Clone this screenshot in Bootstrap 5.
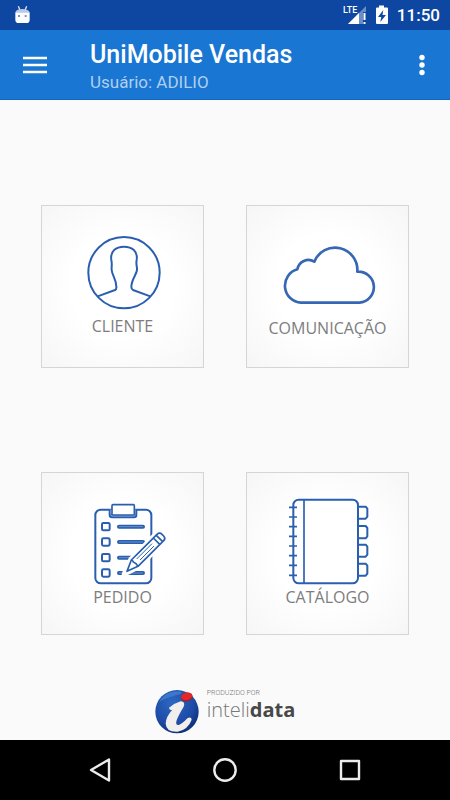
<!DOCTYPE html>
<html lang="pt-BR">
<head>
<meta charset="utf-8">
<meta name="viewport" content="width=device-width, initial-scale=1">
<title>UniMobile Vendas</title>
<link href="https://cdn.jsdelivr.net/npm/bootstrap@5.3.0/dist/css/bootstrap.min.css" rel="stylesheet">
<style>
  body { font-family: Roboto, "Liberation Sans", sans-serif; background: #fafafa; }
  .status-bar { background: #0d47a1; height: 30px; padding: 0 10px 0 15px; font-size: 17px; line-height: 30px; font-weight: 500; }
  .app-bar { background: #1976d2; min-height: 70px; border-bottom: 1px solid #1565c0; padding: 0 17px 0 13px; }
  .app-title { font-size: 25px; line-height: 30px; font-weight: 500; }
  .app-user { font-size: 17px; line-height: 24px; color: #b0cff0; }
  .bar-btn { width: 44px; height: 44px; }
  .bar-btn.slim { width: 22px; }
  .heading { margin-left: 33px; padding-top: 5px; }
  .menu-grid { padding: 105px 41px 0; column-gap: 42px; row-gap: 104px; display: grid; grid-template-columns: 1fr 1fr; }
  .tile { min-height: 163px; border: 1px solid #d5d5d5; background: radial-gradient(circle, #fff 45%, #f6f6f6 100%);
    font-family: "Open Sans", sans-serif; font-size: 16px; line-height: 22px; font-weight: 500; color: #7d7d7d; }
  .tile svg { fill: none; stroke: #2a5fb0; stroke-width: 6; stroke-linejoin: round; }
  .brand { font-family: "Open Sans", sans-serif; padding: 0 0 6px; gap: 8px; }
  .brand-note { font-family: Roboto, sans-serif; font-size: 7px; line-height: 8px; font-weight: 300; color: #777; }
  .brand-name { font-size: 20px; line-height: 26px; font-weight: 300; color: #777; }
  .brand-name strong { font-weight: 700; color: #484848; }
  .nav-keys { background: #000; height: 60px; padding: 0 37px; }
  .key { width: 126px; height: 60px; }
  .key svg { fill: none; stroke: #ececec; stroke-width: 2.4; stroke-linejoin: round; }
</style>
</head>
<body class="d-flex flex-column min-vh-100">
  <div class="status-bar d-flex align-items-center text-white">
    <svg width="15" height="18" viewBox="45 15 45 54" aria-hidden="true">
      <path d="M55 16l6 14M80 16l-6 14" stroke="#dfe7f4" stroke-width="4"/>
      <path d="M46 34Q50 24 67 24T89 34Z" fill="#b9cae6"/>
      <path d="M46 34H89V56Q89 66 79 66H56Q46 66 46 56Z" fill="#fff"/>
      <path d="M54 42h6v6h-6zM74 42h6v6h-6z" fill="#7898cc"/>
    </svg>
    <svg class="ms-auto" width="24" height="20" viewBox="0 0 24 20" role="img" aria-label="LTE">
      <path d="M5 19L23 1V7H20V19Z" fill="#6b8cc4"/>
      <path d="M5 19L16 8V19Z" fill="#fff"/>
      <path d="M20.500 8h2v7h-2zM20.500 17h2v2h-2z" fill="#fff"/>
      <text x="0" y="8" font-family="Roboto, sans-serif" font-size="9" font-weight="500" fill="#fff">LTE</text>
    </svg>
    <svg class="ms-2" width="14" height="20" viewBox="0 0 14 20" aria-hidden="true">
      <path d="M1 3.500Q1 2.500 2 2.500H4V.5H9V2.500H12Q13 2.500 13 3.500V18Q13 19 12 19H2Q1 19 1 18Z" fill="#fff"/>
      <path d="M8.300 5L3 12H6.300L5.300 17L11 10H7.500Z" fill="#0d47a1"/>
    </svg>
    <time class="ms-2">11:50</time>
  </div>

  <header class="app-bar d-flex align-items-center">
    <button type="button" class="bar-btn btn p-0 border-0 d-flex align-items-center justify-content-center" aria-label="Menu">
      <svg width="24" height="18" viewBox="0 0 24 18"><path d="M0 2H24M0 9H24M0 16H24" stroke="#fff" stroke-width="2.700"/></svg>
    </button>
    <div class="heading">
      <h1 class="app-title text-white mb-0">UniMobile Vendas</h1>
      <div class="app-user">Usuário: ADILIO</div>
    </div>
    <button type="button" class="bar-btn slim btn p-0 border-0 ms-auto d-flex align-items-center justify-content-center" aria-label="Mais opções">
      <svg width="6" height="22" viewBox="0 0 6 22" fill="#fff"><circle cx="3" cy="3.500" r="2.700"/><circle cx="3" cy="11" r="2.700"/><circle cx="3" cy="18.500" r="2.700"/></svg>
    </button>
  </header>

  <main class="flex-grow-1 d-flex flex-column">
    <div class="menu-grid">
      <button type="button" class="tile p-0 d-flex flex-column align-items-center">
        <svg width="160" height="109" viewBox="24 18 480 327" aria-hidden="true">
          <circle cx="267" cy="218" r="107"/>
          <path d="M188 289L240 270Q245 268 244 260C244 238 231 225 230 210C229 200 232 194 229 180C225 153 243 140 267 140S309 153 305 180C302 194 307 200 306 210C304 225 290 238 289 260Q289 267 294 270L346 289"/>
        </svg>
        <span>CLIENTE</span>
      </button>
      <button type="button" class="tile p-0 d-flex flex-column align-items-center">
        <svg width="160" height="111" viewBox="24 18 480 333" aria-hidden="true">
          <path stroke-width="8" stroke="#3567b4" d="M183 308H358A46.500 46.500 0 0 0 352 215A67 67 0 0 0 223 185A34 34 0 0 0 172 208A51 51 0 0 0 183 308Z"/>
        </svg>
        <span>COMUNICAÇÃO</span>
      </button>
      <button type="button" class="tile p-0 d-flex flex-column align-items-center">
        <svg width="160" height="113" viewBox="24 24 480 339" aria-hidden="true">
          <rect x="181" y="134" width="168" height="221" rx="16"/>
          <path fill="#fff" d="M224 134V150Q224 157 231 157H297Q304 157 304 150V134"/>
          <path d="M227 149H301" stroke-width="5"/>
          <rect x="231" y="119" width="67" height="31" rx="3" fill="#fff" stroke-width="5"/>
          <g stroke-width="6"><rect x="201" y="174" width="23" height="22" rx="4"/><rect x="201" y="220" width="23" height="22" rx="4"/><rect x="201" y="267" width="23" height="22" rx="4"/><rect x="201" y="313" width="23" height="22" rx="4"/></g>
          <path stroke-width="12" stroke-linecap="round" d="M252 185H324M252 231H324M252 278H324M252 324H324"/>
          <path stroke="#8aa9d6" stroke-width="2" d="M252 185H324M252 231H324M252 278H324M252 324H324"/>
          <path d="M268 327L288 283L366 205Q374 199 381 205L388 212Q394 219 388 227L311 305Z" fill="#fff" stroke="#fff" stroke-width="16"/>
          <path d="M276 319L289 285L366 208Q374 201 381 208L386 213Q393 220 386 227L309 304ZM289 285Q294 286 295 291Q304 294 309 304M355 219L375 239M364 211L383 230" fill="#fff" stroke-width="5"/>
          <path d="M305 282L351 236M315 285L357 243M301 274L344 231" stroke-width="3"/>
        </svg>
        <span>PEDIDO</span>
      </button>
      <button type="button" class="tile p-0 d-flex flex-column align-items-center">
        <svg width="160" height="113" viewBox="24 24 480 339" aria-hidden="true">
          <rect x="160" y="104" width="194" height="251" rx="16" fill="#fff"/>
          <path stroke-width="5" d="M192 104V355"/>
          <path stroke-width="5" d="M147 127H171M147 156H171M147 185H171M147 214H171M147 243H171M147 272H171M147 301H171M147 331H171"/>
          <path d="M355 125H377L382 131V155L377 161H355M355 183H377L382 189V214L377 220H355M355 239H377L382 245V269L377 275H355M355 296H377L382 302V326L377 332H355"/>
        </svg>
        <span>CATÁLOGO</span>
      </button>
    </div>

    <div class="brand mt-auto d-flex justify-content-center">
      <svg width="44" height="45" viewBox="44 28 132 135" aria-hidden="true">
        <defs>
          <radialGradient id="ball" cx=".4" cy=".3" r=".75"><stop offset="0" stop-color="#2d68c2"/><stop offset=".65" stop-color="#1d4ba6"/><stop offset="1" stop-color="#0c2b70"/></radialGradient>
        </defs>
        <circle cx="110" cy="96" r="65" fill="url(#ball)"/>
        <path d="M56 66Q76 34 111 35Q124 35 124 42Q94 48 56 66Z" fill="#3b78cc"/>
        <path d="M86 84Q104 70 121 65Q136 66 130 81Q114 107 109 122Q104 137 115 136Q127 132 141 116Q153 110 154 120Q143 150 112 156Q78 158 76 132Q76 112 96 90Q88 94 86 84Z" fill="#f1efed"/>
        <ellipse cx="139" cy="52" rx="18" ry="13" transform="rotate(-12 139 52)" fill="#a91d20"/>
        <ellipse cx="139" cy="50" rx="17" ry="11" transform="rotate(-12 139 50)" fill="#e2282b"/>
      </svg>
      <div>
        <div class="brand-note">PRODUZIDO POR</div>
        <div class="brand-name">inteli<strong>data</strong></div>
      </div>
    </div>
  </main>

  <nav class="nav-keys d-flex justify-content-between" aria-label="Sistema">
    <button type="button" class="key btn p-0 border-0" aria-label="Voltar"><svg width="24" height="26" viewBox="0 0 24 26"><path d="M21 2.500V23.500L3 13Z"/></svg></button>
    <button type="button" class="key btn p-0 border-0" aria-label="Início"><svg width="26" height="26" viewBox="0 0 26 26"><circle cx="13" cy="13" r="10.700"/></svg></button>
    <button type="button" class="key btn p-0 border-0" aria-label="Recentes"><svg width="24" height="24" viewBox="0 0 24 24"><rect x="3" y="3" width="18" height="18"/></svg></button>
  </nav>
<script src="https://cdn.jsdelivr.net/npm/bootstrap@5.3.0/dist/js/bootstrap.bundle.min.js"></script>
</body>
</html>
